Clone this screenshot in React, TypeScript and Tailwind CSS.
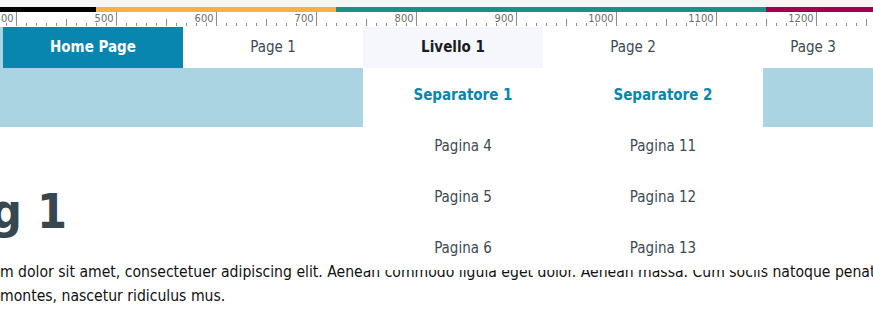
import React from 'react';

const FONT = { fontFamily: '"DejaVu Sans Condensed", "DejaVu Sans", Verdana, sans-serif' };

// ruler: value 400 sits at x = 16
function Ruler() {
  const ticks: React.ReactNode[] = [];
  const labels: React.ReactNode[] = [];
  for (let v = 390; v <= 1260; v += 10) {
    const x = 16 + (v - 400) + 0.5;
    const major = v % 100 === 0;
    const mid = !major && v % 50 === 0;
    const y1 = major ? 0 : mid ? 7 : 11;
    ticks.push(<line key={v} x1={x} x2={x} y1={y1} y2={14} stroke="#8c8c8c" strokeWidth={1} />);
    if (major) {
      labels.push(
        <text key={'l' + v} x={x - 3} y={9.5} textAnchor="end" fontSize={11} fill="#6b6b6b" style={FONT}>
          {v}
        </text>
      );
    }
  }
  return (
    <svg width={873} height={15} className="block">
      {ticks}
      {labels}
    </svg>
  );
}

const subCols = [
  { title: 'Separatore 1', items: ['Pagina 4', 'Pagina 5', 'Pagina 6'] },
  { title: 'Separatore 2', items: ['Pagina 11', 'Pagina 12', 'Pagina 13'] },
];

export default function App() {
  return (
    <div className="w-[873px] h-[318px] overflow-hidden bg-white" style={FONT}>
      {/* top strip + colour bar */}
      <div className="h-[7px] bg-[#f6f6f6]" />
      <div className="flex h-[5px]">
        <div className="w-[96px] bg-black" />
        <div className="w-[240px] bg-[#f8b045]" />
        <div className="w-[430px] bg-[#1a9088]" />
        <div className="flex-1 bg-[#a1004b]" />
      </div>
      <Ruler />

      {/* navigation */}
      <div className="relative">
        <div className="flex h-[41px] bg-[#aad4e2] pl-[3px] text-[15px] whitespace-nowrap">
          <div className="w-[180px] shrink-0 flex items-center justify-center bg-[#0886b0] text-white font-bold">
            Home Page
          </div>
          <div className="w-[180px] shrink-0 flex items-center justify-center bg-white text-[#3d4a52]">Page 1</div>
          <div className="w-[180px] shrink-0 flex items-center justify-center bg-[#f5f7fc] text-[#1c1c1c] font-bold">
            Livello 1
          </div>
          <div className="w-[180px] shrink-0 flex items-center justify-center bg-white text-[#3d4a52]">Page 2</div>
          <div className="w-[180px] shrink-0 flex items-center justify-center bg-white text-[#3d4a52]">Page 3</div>
        </div>
        <div className="h-[59px] bg-[#aad4e2]" />

        {/* dropdown of Livello 1 */}
        <div className="absolute left-[363px] top-[41px] w-[400px] h-[202px] overflow-hidden bg-white flex text-[15px]">
          {subCols.map((col) => (
            <div key={col.title} className="w-[200px] flex flex-col">
              <div className="h-[51px] shrink-0 flex items-center justify-center pt-[3px] font-bold text-[#0886b0]">
                {col.title}
              </div>
              {col.items.map((it) => (
                <div key={it} className="h-[51px] shrink-0 flex items-center justify-center pt-[3px] text-[#3d4a52]">
                  {it}
                </div>
              ))}
            </div>
          ))}
        </div>
      </div>

      {/* page content, scrolled to the right */}
      <div className="pt-[55px]">
        <h1 className="ml-[-9px] text-[48px] leading-[58px] font-bold text-[#37474f] whitespace-nowrap">g 1</h1>
        <p className="mt-[20px] text-[15.6px] leading-[24px] text-[#111] whitespace-nowrap">
          m dolor sit amet, consectetuer adipiscing elit. Aenean commodo ligula eget dolor. Aenean massa. Cum sociis
          natoque penatibus et magnis dis parturient
          <br />
          montes, nascetur ridiculus mus.
        </p>
      </div>
    </div>
  );
}
